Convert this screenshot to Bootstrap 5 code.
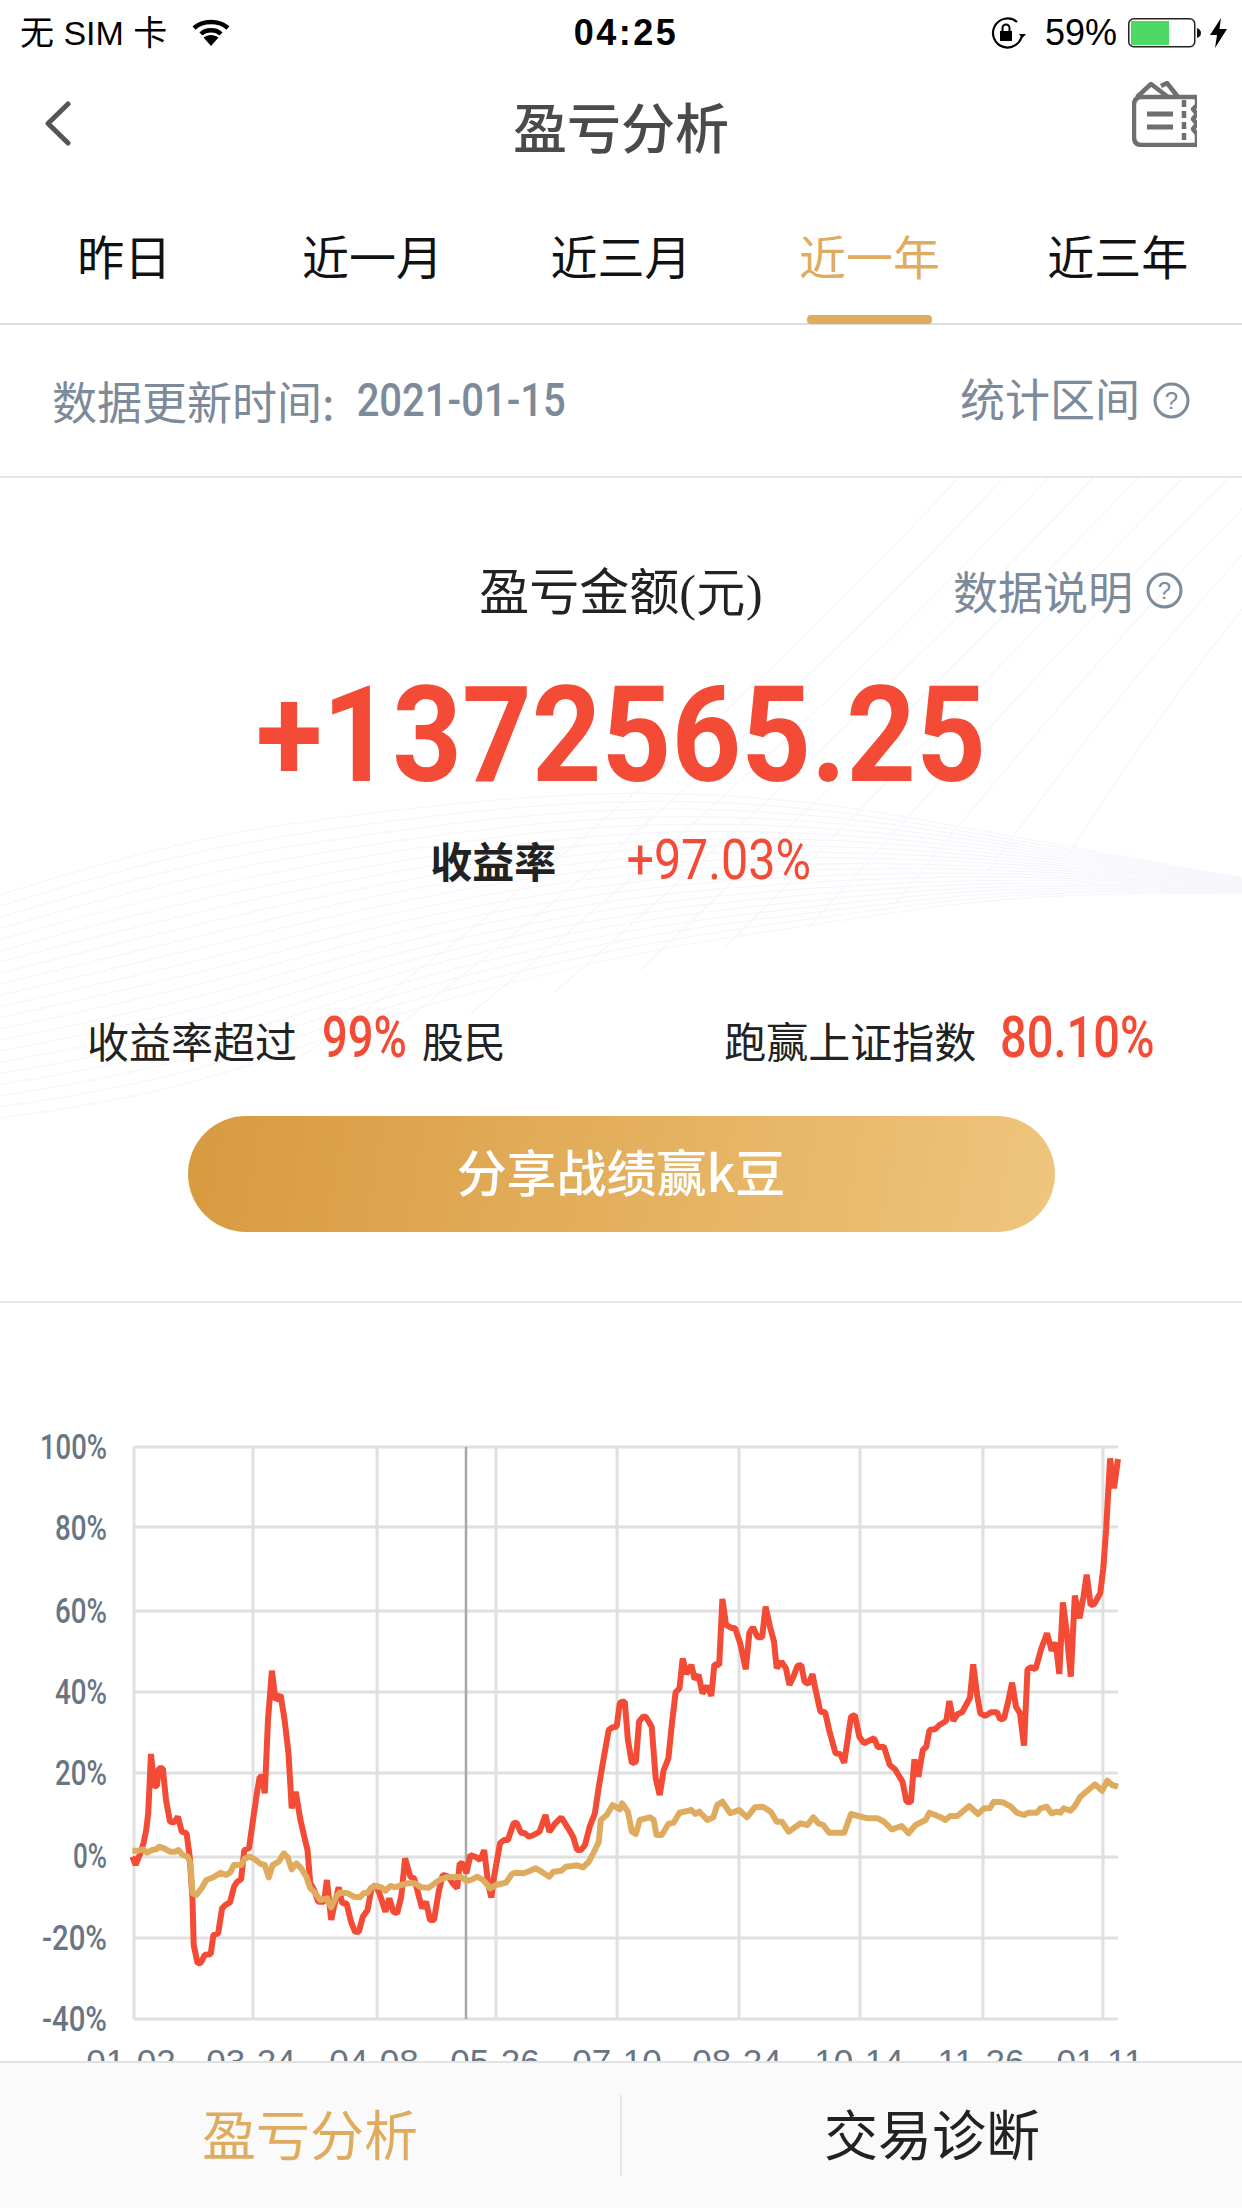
<!DOCTYPE html>
<html lang="zh">
<head>
<meta charset="utf-8">
<title>盈亏分析</title>
<link href="https://cdn.jsdelivr.net/npm/bootstrap@5.3.0/dist/css/bootstrap.min.css" rel="stylesheet">
<style>
html,body{margin:0;background:#fff}
body{font-family:"Noto Sans CJK SC","Liberation Sans",sans-serif;color:#222}
.screen{width:1242px;height:2208px;position:relative;overflow:hidden;background:#fff}
.status-bar{height:62px;padding:3px 15px 0 20px;color:#000;font-family:"Liberation Sans","Noto Sans CJK SC",sans-serif;font-size:34px;line-height:1}
.status-side{flex:1 1 0}
.wifi-mark{margin-left:25px}
.clock{font-size:36px;font-weight:700;letter-spacing:2.5px;margin-left:5px}
.lock-mark{margin-right:-1px}
.pct{font-size:36px;margin-left:20px}
.batt-mark{margin-left:11px}
.nav-head{height:132px;padding:0 45px}
.nav-title{font-size:54px;font-weight:500;color:#4a4a4a;line-height:1;margin-bottom:4px}
.nav-slot{flex:1 1 0}
.back-mark{margin-bottom:9px}
.ticket-mark{margin-bottom:28px}
.range-tabs{height:131px;border-bottom:2px solid #ddd;position:relative}
.range-tab{flex:1 1 0;text-align:center;font-size:47px;line-height:122px;color:#111}
.range-tab.on{color:#dfac5f;position:relative}
.range-tab.on::after{content:"";position:absolute;left:62px;right:62px;bottom:-1px;height:9px;border-radius:4px;background:#dfac5f}
.update-row{height:153px;padding:0 52px 0 52px;border-bottom:2px solid #e6e6e6;color:#7c8a9a;font-size:45px;position:relative;z-index:1}
.squeeze{display:inline-block;font-family:Roboto,sans-serif}
.update-date{font-size:46px;font-weight:500;margin:0 -15px 0 6px;transform:scaleX(.87)}
.range-note{margin-top:-6px}
.help-mark{width:37px;height:37px;margin-left:13px;flex:none}
.range-note .help-mark{margin-top:6px}
.summary{position:relative;height:825px;padding-top:80px;border-bottom:2px solid #e6e6e6}
.wave-bg{position:absolute;left:0;top:-2px;width:1242px;height:823px}
.summary>div{position:relative}
.sum-head{display:grid;grid-template-columns:1fr auto 1fr;height:60px;align-items:center}
.sum-label{font-size:50px;line-height:60px;color:#222}
.serif{font-family:"Liberation Serif",serif}
.sum-note{font-size:45px;color:#7c8a9a;justify-self:end;line-height:60px;padding-right:59px}
.big-num{margin-top:53px;height:130px;line-height:130px;text-align:center;font-family:Roboto,sans-serif;font-weight:700;font-size:133px;color:#f34b35;transform:scaleX(.915)}
.rate-row{margin-top:34px;height:50px;gap:70px;line-height:50px}
.rate-label{font-size:42px;font-weight:700;color:#222}
.rate-val{font-size:56px;color:#f34b35;transform:scaleX(.865);margin:0 -14px}
.compare-row{margin-top:125px;height:60px;padding:0 87px 0 87px;font-size:42px;line-height:60px;color:#222}
.hot{color:#f34b35;font-weight:500;font-size:58px;line-height:50px}
.hot-a{transform:scaleX(.78);margin:-6px 3px 0 13px}
.hot-b{transform:scaleX(.81);margin:-6px -18px 0 6px}
.share-btn{display:block;width:867px;height:116px;margin:46px auto 0;border:0;background:linear-gradient(100deg,#d89a3f,#efc57d);color:#fff;font-size:50px;font-weight:500;line-height:108px;padding:0 0 8px}
.chart{display:block;width:1242px;height:905px}
.foot-bar{position:absolute;left:0;right:0;bottom:0;height:147px;background:#fafafa;border-top:2px solid #e2e2e2}
.foot-item{flex:1 1 0;height:81px;line-height:76px;text-align:center;font-size:54px;color:#222}
.foot-item.on{color:#dfac5f}
.foot-item+.foot-item{border-left:2px solid #e6e6e6}
</style>
</head>
<body>
<div class="screen">
  <div class="status-bar d-flex align-items-center">
    <div class="status-side d-flex align-items-center">
      <span>无 SIM 卡</span>
      <svg class="wifi-mark" width="38" height="28" viewBox="0 0 38 28" fill="none" stroke="#000" stroke-width="4.5"><path d="M2 9C11 1 27 1 36 9"/><path d="M9 15C14 10 24 10 29 15"/><path d="M11.500 18.500L19 27L26.500 18.500C22 15 16 15 11.500 18.500Z" fill="#000" stroke="none"/></svg>
    </div>
    <div class="clock">04:25</div>
    <div class="status-side d-flex align-items-center justify-content-end">
      <svg class="lock-mark" width="36" height="32" viewBox="0 0 36 32" fill="none" stroke="#000" stroke-width="2.200"><path d="M32 17A14.500 14.500 0 1 1 27 5"/><path d="M29 17l3.500 4 3.500-4z" fill="#000" stroke="none"/><rect x="10" y="14" width="12" height="10" fill="#000" stroke="none"/><path d="M12.500 14V11a3.500 3.500 0 0 1 7 0v3" stroke-width="2"/></svg>
      <span class="pct">59%</span>
      <svg class="batt-mark" width="74" height="30" viewBox="0 0 74 30"><rect x=".75" y=".75" width="66" height="28" rx="5" fill="#fff" stroke="#222" stroke-width="1.500"/><rect x="3" y="3" width="38" height="24" fill="#4cd964"/><path d="M69 10c3 1 4 3 4 5s-1 4-4 5z" fill="#111"/></svg>
      <svg class="ms-2" width="17" height="30" viewBox="0 0 17 30"><path d="M11 0L0 17H7L5 30L17 11H9.500Z" fill="#000"/></svg>
    </div>
  </div>

  <div class="nav-head d-flex align-items-center">
    <div class="nav-slot">
      <svg class="back-mark" width="26" height="45" viewBox="0 0 26 45" fill="none" stroke="#555" stroke-width="5" stroke-linecap="round" stroke-linejoin="round"><path d="M23 3L3 22.500L23 42"/></svg>
    </div>
    <div class="nav-title">盈亏分析</div>
    <div class="nav-slot d-flex justify-content-end">
      <svg class="ticket-mark" width="65" height="66" viewBox="0 0 65 66" fill="none" stroke="#6f6f6f" stroke-width="4.500" stroke-linejoin="round"><path d="M65 16H10Q2 16 2 24V56Q2 64 10 64H65"/><path d="M5 16L19 3L36 16M29 5L35 2L46 16"/><path d="M65 16V24L61 28L65 33L61 38L65 43L61 48L65 53V64"/><path d="M52 19V62" stroke-dasharray="7 4"/><path d="M15 33H41M15 46H41" stroke-width="5"/></svg>
    </div>
  </div>

  <div class="range-tabs d-flex">
    <div class="range-tab">昨日</div>
    <div class="range-tab">近一月</div>
    <div class="range-tab">近三月</div>
    <div class="range-tab on">近一年</div>
    <div class="range-tab">近三年</div>
  </div>

  <div class="update-row d-flex align-items-center justify-content-between">
    <div class="d-flex align-items-center"><span>数据更新时间:</span><span class="squeeze update-date">2021-01-15</span></div>
    <div class="d-flex align-items-center range-note"><span>统计区间</span>
      <svg class="help-mark" viewBox="0 0 37 37"><circle cx="18.500" cy="18.500" r="16.500" fill="none" stroke="#7c8a9a" stroke-width="3"/><text x="18.500" y="27" text-anchor="middle" font-size="24" font-family="Liberation Sans" fill="#7c8a9a">?</text></svg>
    </div>
  </div>

  <div class="summary">
    <svg class="wave-bg" id="waves" viewBox="0 478 1242 823" fill="none" stroke="#f5f5fc" stroke-width="1.200"></svg>
    <div class="sum-head">
      <span></span>
      <div class="sum-label">盈亏金额<span class="serif">(元)</span></div>
      <div class="sum-note d-flex align-items-center"><span>数据说明</span>
        <svg class="help-mark" viewBox="0 0 37 37"><circle cx="18.500" cy="18.500" r="16.500" fill="none" stroke="#7c8a9a" stroke-width="3"/><text x="18.500" y="27" text-anchor="middle" font-size="24" font-family="Liberation Sans" fill="#7c8a9a">?</text></svg>
      </div>
    </div>
    <div class="big-num">+1372565.25</div>
    <div class="rate-row d-flex justify-content-center align-items-center">
      <span class="rate-label">收益率</span>
      <span class="squeeze rate-val">+97.03%</span>
    </div>
    <div class="compare-row d-flex justify-content-between align-items-center">
      <div class="d-flex align-items-center"><span>收益率超过</span><span class="squeeze hot hot-a">99%</span><span>股民</span></div>
      <div class="d-flex align-items-center"><span>跑赢上证指数</span><span class="squeeze hot hot-b">80.10%</span></div>
    </div>
    <button type="button" class="btn rounded-pill share-btn">分享战绩赢k豆</button>
  </div>

  <svg class="chart" viewBox="0 1303 1242 905" id="chart">
    <g stroke="#e0e0e0" stroke-width="3" fill="none">
      <path d="M134 1447H1118M134 1527H1118M134 1611H1118M134 1692H1118M134 1773H1118M134 1857H1118M134 1938H1118M134 2019H1118"/>
      <path d="M134 1447V2019M253 1447V2019M377 1447V2019M496 1447V2019M617 1447V2019M739 1447V2019M860 1447V2019M983 1447V2019M1103 1447V2019"/>
    </g>
    <path d="M466 1447V2019" stroke="#a8a8a8" stroke-width="2.500"/>
    <g font-family="Roboto,sans-serif" font-weight="500" font-size="35" fill="#687583" text-anchor="end">
      <text x="107" y="1459" textLength="67" lengthAdjust="spacingAndGlyphs">100%</text><text x="107" y="1540" textLength="52" lengthAdjust="spacingAndGlyphs">80%</text><text x="107" y="1623" textLength="52" lengthAdjust="spacingAndGlyphs">60%</text><text x="107" y="1704" textLength="52" lengthAdjust="spacingAndGlyphs">40%</text><text x="107" y="1785" textLength="52" lengthAdjust="spacingAndGlyphs">20%</text><text x="107" y="1868" textLength="34" lengthAdjust="spacingAndGlyphs">0%</text><text x="107" y="1950" textLength="65" lengthAdjust="spacingAndGlyphs">-20%</text><text x="107" y="2031" textLength="65" lengthAdjust="spacingAndGlyphs">-40%</text>
    </g>
    <g font-family="Liberation Sans,sans-serif" font-size="35" fill="#687583" text-anchor="middle">
      <text x="131" y="2074">01-02</text><text x="251" y="2074">03-24</text><text x="374" y="2074">04-08</text><text x="495" y="2074">05-26</text><text x="617" y="2074">07-10</text><text x="737" y="2074">08-24</text><text x="859" y="2074">10-14</text><text x="981" y="2074">11-26</text><text x="1100" y="2074">01-11</text>
    </g>
    <polyline id="lineRed" fill="none" stroke="#f34b35" stroke-width="6" stroke-linejoin="bevel"/>
    <polyline id="lineGold" fill="none" stroke="#dfac5f" stroke-width="6" stroke-linejoin="round"/>
  </svg>

  <div class="foot-bar d-flex align-items-center">
    <div class="foot-item on">盈亏分析</div>
    <div class="foot-item">交易诊断</div>
  </div>
</div>

<script src="https://cdn.jsdelivr.net/npm/bootstrap@5.3.0/dist/js/bootstrap.bundle.min.js"></script>
<script>
(function(){
  var redL=[335,1370,343,1395,355,1360,363,1330,370,1290,375,1240,382,1062,390,1158,397,1158,402,1105,412,1105,420,1200,430,1265,440,1268,450,1250,460,1295,472,1300,480,1370,487,1500,490,1635,500,1690,508,1688,518,1665,533,1662,540,1605,552,1600,562,1525,570,1515,582,1507,592,1460,600,1445,610,1438,618,1350,630,1345,640,1260,650,1180,657,1130,663,1130,670,1180,678,960,688,812,697,900,710,885,720,960,730,1060,738,1225,748,1175,760,1260,770,1310,778,1350,785,1450,795,1470,805,1505,820,1505,827,1440,838,1560,845,1520,857,1462,866,1510,877,1510,888,1565,898,1595,908,1595,918,1550,930,1530,940,1465,950,1455,960,1480,975,1535,985,1495,995,1535,1005,1540,1015,1490,1025,1375,1038,1430,1048,1435,1060,1490,1068,1525,1078,1505,1088,1560,1098,1560,1110,1475,1120,1425,1135,1430,1145,1450,1157,1465,1163,1390,1172,1392,1180,1420,1190,1365,1205,1372,1215,1380,1225,1350,1235,1450,1243,1493,1250,1430,1265,1330,1275,1320,1285,1320,1300,1268,1308,1270,1318,1298,1328,1300,1338,1310,1350,1305,1365,1295,1380,1245,1390,1295,1405,1270,1420,1252,1440,1290,1450,1310,1460,1350,1470,1350,1480,1335,1492,1280,1505,1240,1515,1160,1525,1090,1540,990,1550,982,1560,980,1568,910];
  var redR=[5,905,12,905,20,1020,30,1090,40,1085,48,965,58,950,65,950,80,980,90,1135,100,1185,110,1110,122,1075,130,980,140,877,150,865,158,775,167,822,180,795,188,838,198,825,208,880,220,858,230,888,238,793,250,795,258,597,267,675,280,683,290,685,303,730,317,808,326,698,335,682,347,712,358,712,367,620,378,680,388,725,395,805,407,785,418,805,427,855,437,830,447,798,457,795,465,845,475,852,485,822,493,870,505,935,517,937,527,990,543,1060,555,1062,565,1088,582,950,592,945,603,1010,615,1030,640,1015,650,1042,665,1040,680,1095,693,1108,712,1145,722,1205,733,1207,742,1078,752,1130,763,1050,772,1040,780,990,795,987,805,975,822,963,830,903,840,963,850,943,862,937,882,893,890,793,900,885,908,940,920,948,935,937,950,937,958,958,968,955,978,905,988,848,998,920,1008,940,1018,1037,1027,808,1037,802,1047,808,1062,745,1076,700,1088,752,1098,728,1107,822,1116,607,1125,690,1136,830,1146,587,1158,655,1168,590,1176,524,1186,615,1195,612,1210,580,1218,505,1225,390,1235,175,1245,265,1255,177];
  var goldL=[335,152,350,152,362,148,372,158,385,150,395,148,403,140,415,145,430,155,443,155,452,150,462,165,475,170,482,190,487,280,497,285,510,265,522,240,540,232,558,218,572,225,582,218,592,195,610,195,620,175,632,170,645,178,660,192,670,195,680,232,690,195,705,185,718,160,728,172,738,208,750,190,762,205,775,230,785,265,795,275,810,300,828,295,838,322,850,290,860,278,880,280,895,290,910,292,920,280,930,278,940,262,952,258,965,262,975,272,988,258,1000,262,1015,255,1030,250,1050,250,1065,262,1085,263,1100,250,1115,238,1130,232,1165,230,1180,243,1195,238,1207,230,1220,238,1230,250,1240,265,1255,255,1280,248,1295,222,1305,218,1325,220,1340,213,1355,205,1370,215,1390,230,1400,215,1420,212,1432,200,1460,196,1475,202,1490,185,1505,150,1515,125,1520,60,1535,45,1550,15,1568,28];
  var goldR=[5,10,20,35,30,95,40,102,50,60,75,52,85,60,92,105,105,105,122,72,135,68,150,38,180,30,190,42,200,35,220,60,235,52,245,15,258,5,278,40,300,30,320,52,340,22,360,20,380,35,395,65,408,65,425,95,455,70,472,75,487,52,500,70,512,75,527,98,565,98,582,42,600,48,625,55,650,55,665,65,685,88,710,78,727,100,745,75,770,60,780,38,805,50,820,60,832,48,850,48,880,18,902,42,918,25,932,25,942,5,965,7,985,20,1000,38,1018,45,1030,38,1050,38,1060,25,1075,20,1088,40,1100,35,1110,38,1118,25,1135,32,1145,20,1160,-10,1180,-30,1197,-47,1215,-28,1228,-58,1240,-45,1255,-40];
  function build(a,ox,sx,oy){var o=[];for(var i=0;i<a.length;i+=2){o.push((ox+a[i]/sx).toFixed(1)+','+(oy+a[i+1]/3).toFixed(1));}return o;}
  document.getElementById('lineRed').setAttribute('points',build(redL,0,2.53,1400).concat(build(redR,620,2.52,1400)).join(' '));
  document.getElementById('lineGold').setAttribute('points',build(goldL,0,2.53,1800).concat(build(goldR,620,2.52,1800)).join(' '));

  var xs=[0,160,400,620,820,1020,1242],top=[897,845,810,792,803,840,880],bot=[1120,1100,1013,957,925,897,895];
  function smooth(p){var d='M'+p[0][0]+' '+p[0][1];for(var i=1;i<p.length-1;i++){var mx=(p[i][0]+p[i+1][0])/2,my=(p[i][1]+p[i+1][1])/2;d+='Q'+p[i][0]+' '+p[i][1]+' '+mx+' '+my;}d+='L'+p[p.length-1][0]+' '+p[p.length-1][1];return d;}
  var out='',n,t,i,p;
  for(n=0;n<=20;n++){t=n/20;p=[];for(i=0;i<xs.length;i++){p.push([xs[i],(top[i]+(bot[i]-top[i])*t).toFixed(1)*1]);}out+='<path d="'+smooth(p)+'"/>';}
  for(n=0;n<10;n++){var x0=300+n*85,y0=1060-n*22,x1=960+n*45;out+='<path d="M'+x0+' '+y0+'Q'+(x0+(x1-x0)*0.55)+' '+(y0-260)+' '+x1+' 478"/>';}
  document.getElementById('waves').innerHTML=out;
})();
</script>
</body>
</html>
